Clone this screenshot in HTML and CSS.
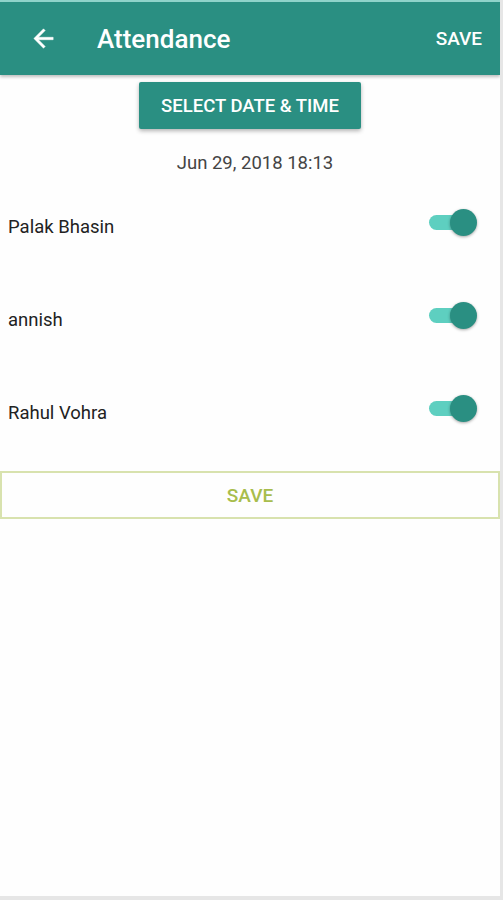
FILE: index.html
```html
<!DOCTYPE html>
<html lang="en">
<head>
  <meta charset="UTF-8" />
  <meta name="viewport" content="width=device-width, initial-scale=1.0">
  <title>Attendance</title>
  <link rel="stylesheet" href="styles.css">
</head>
<body>
  <div class="screen">
    <header class="toolbar">
      <svg class="back" width="24" height="24" viewBox="0 0 24 24">
        <path d="M20 11H7.83l5.59-5.59L12 4l-8 8 8 8 1.41-1.41L7.83 13H20v-2z" fill="#fff" stroke="#fff" stroke-width="0.4"/>
      </svg>
      <h1>Attendance</h1>
      <span class="toolbar-save">SAVE</span>
    </header>

    <main>
      <div class="picker">
        <button class="select-btn">SELECT DATE &amp; TIME</button>
      </div>
      <p class="datum">Jun 29, 2018 18:13</p>

      <div class="liste">
        <div class="zeile">
          <span class="name">Palak Bhasin</span>
          <span class="toggle"><span class="thumb"></span></span>
        </div>
        <div class="zeile">
          <span class="name">annish</span>
          <span class="toggle"><span class="thumb"></span></span>
        </div>
        <div class="zeile">
          <span class="name">Rahul Vohra</span>
          <span class="toggle"><span class="thumb"></span></span>
        </div>
      </div>

      <button class="save-btn">SAVE</button>
    </main>
  </div>
</body>
</html>
```

FILE: styles.css
```css
body {
  margin: 0;
  font-family: Roboto, "Liberation Sans", sans-serif;
  background: #e6e6e6;
}

.screen {
  width: 500px;
  height: 896px;
  background: #fefefe;
  overflow: hidden;
}

.toolbar {
  height: 73px;
  border-top: 2px solid #8fd3ca;
  background: #2a8f82;
  display: flex;
  align-items: center;
  color: white;
  box-shadow: 0 2px 3px rgba(0,0,0,0.25);
}

.back {
  margin-left: 29px;
  width: 29px;
  height: 29px;
}

.toolbar h1 {
  margin: 0 0 0 39px;
  font-size: 26px;
  font-weight: 500;
  flex: 1;
}

.toolbar-save {
  font-size: 19px;
  font-weight: 500;
  margin-right: 18px;
}

.picker {
  display: flex;
  justify-content: center;
  padding-top: 7px;
}

.select-btn {
  width: 222px;
  height: 47px;
  background: #2a8f82;
  color: white;
  border: none;
  border-radius: 2px;
  font-family: inherit;
  font-size: 18.5px;
  font-weight: 500;
  padding: 0;
  box-shadow: 0 2px 4px rgba(0,0,0,0.3);
}

.datum {
  margin: 24px 0 0;
  text-align: center;
  font-size: 18.5px;
  line-height: 20px;
  color: #444;
  padding-left: 10px;
}

.liste {
  margin-top: 7px;
}

.zeile {
  height: 93px;
  display: flex;
  align-items: center;
  justify-content: space-between;
  padding: 0 31px 0 8px;
  font-size: 18.5px;
  color: #222;
}

.toggle {
  position: relative;
  width: 40px;
  height: 15px;
  border-radius: 8px;
  background: #5ecfc0;
  margin-bottom: 8px;
}

.thumb {
  position: absolute;
  right: -8px;
  top: -6px;
  width: 27px;
  height: 27px;
  border-radius: 50%;
  background: #2a8f82;
  box-shadow: 0 1px 3px rgba(0,0,0,0.35);
}

.save-btn {
  display: block;
  width: 500px;
  height: 48px;
  margin-top: 12px;
  background: #fefefe;
  border: 2px solid #d8e2ae;
  color: #a8bd4c;
  font-family: inherit;
  font-size: 19px;
  font-weight: 500;
}
```
